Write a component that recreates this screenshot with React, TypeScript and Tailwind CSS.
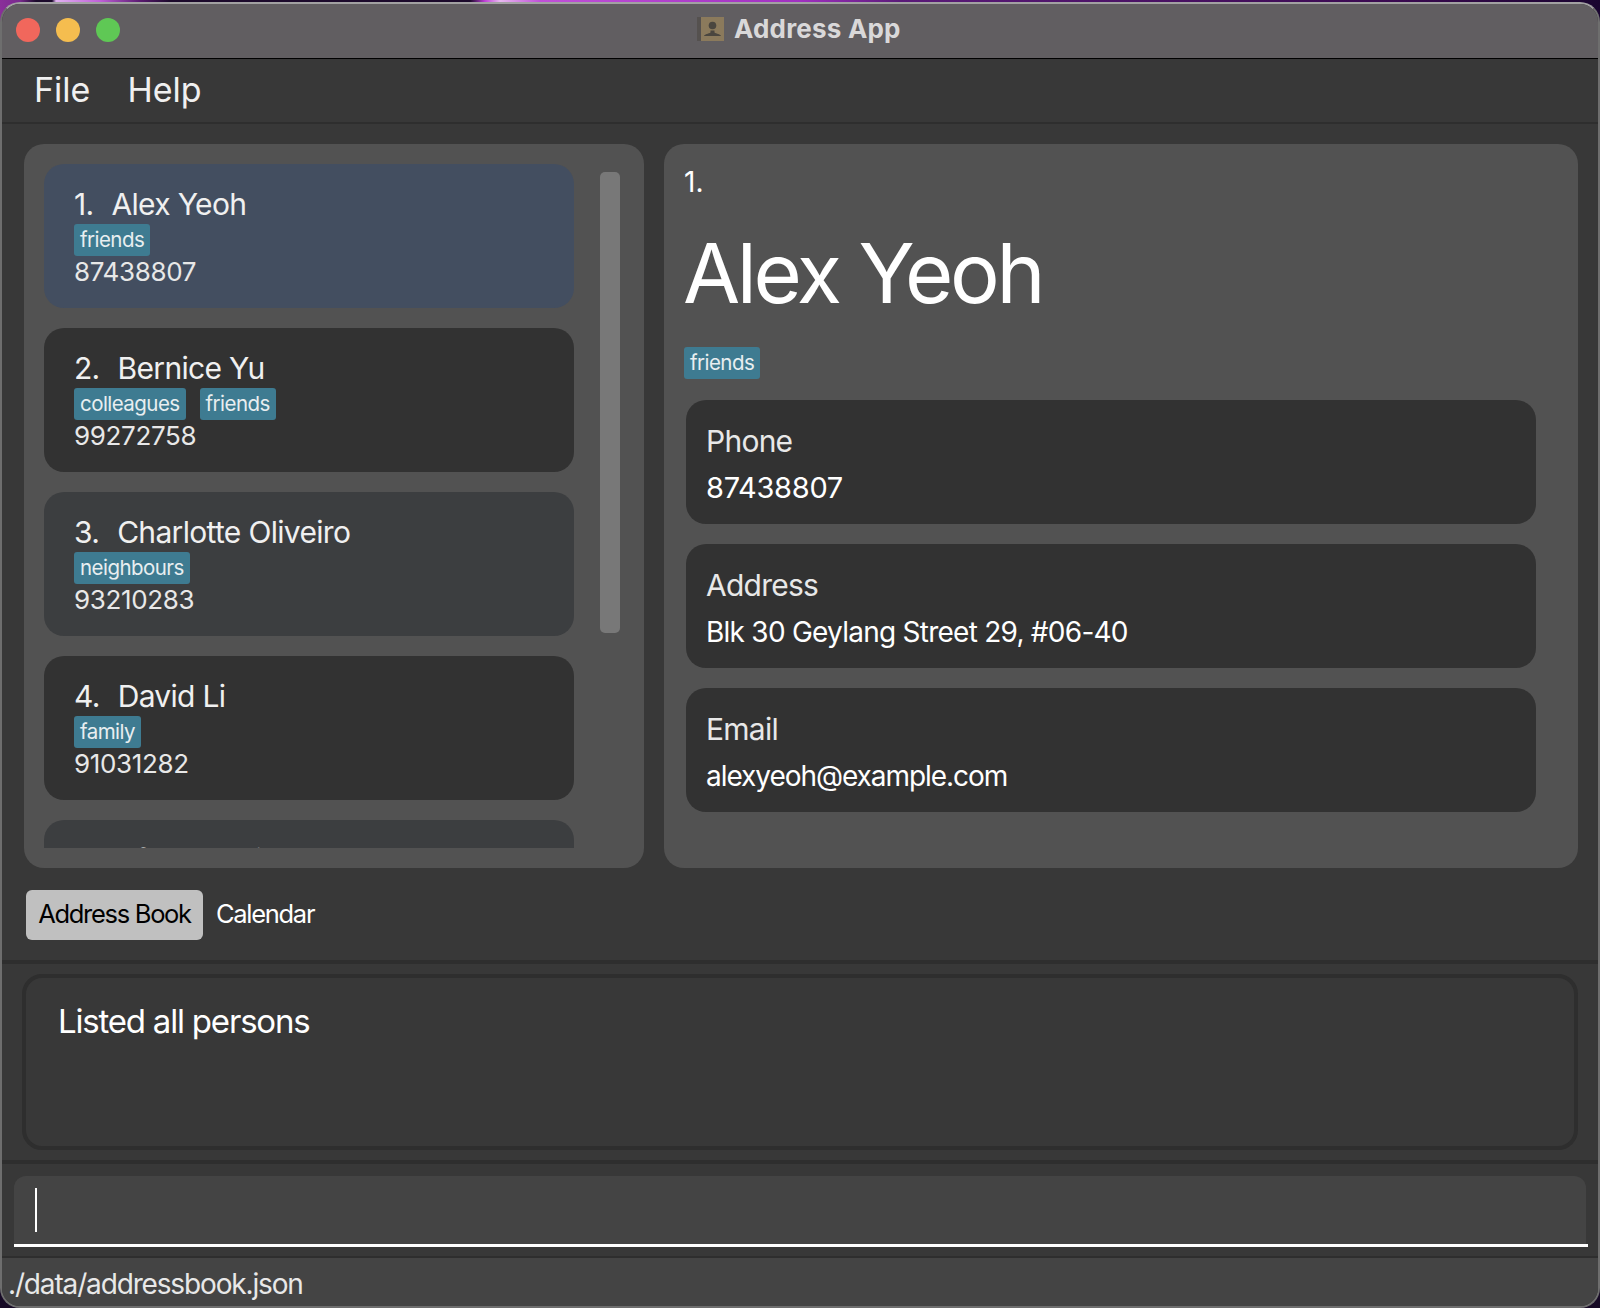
const font = "font-['Inter','Liberation_Sans',sans-serif]";

function Tag({ children }: { children: string }) {
  return (
    <span className="flex h-[32px] items-center rounded-[3px] bg-[#3e7b91] px-[6px] text-[20.5px] tracking-[-0.55px] text-[#e8eef0]">
      {children}
    </span>
  );
}

const people = [
  { n: "1.", name: "Alex Yeoh", tags: ["friends"], phone: "87438807", bg: "bg-[#434e60]" },
  { n: "2.", name: "Bernice Yu", tags: ["colleagues", "friends"], phone: "99272758", bg: "bg-[#323232]" },
  { n: "3.", name: "Charlotte Oliveiro", tags: ["neighbours"], phone: "93210283", bg: "bg-[#3c3e40]" },
  { n: "4.", name: "David Li", tags: ["family"], phone: "91031282", bg: "bg-[#323232]" },
  { n: "5.", name: "Irfan Ibrahim", tags: ["classmates"], phone: "92492021", bg: "bg-[#3c3e40]" },
];

function PersonCard({ p }: { p: (typeof people)[number] }) {
  return (
    <div className={`h-[144px] w-[530px] shrink-0 rounded-[20px] pl-[30px] pt-[21px] ${p.bg}`}>
      <div className="flex h-[38px] items-center text-[30px] leading-[38px] tracking-[-0.68px] text-[#f0f0f0]">
        <span>{p.n}</span>
        <span className="ml-[18px]">{p.name}</span>
      </div>
      <div className="mt-[1px] flex gap-[14px]">
        {p.tags.map((t) => (
          <Tag key={t}>{t}</Tag>
        ))}
      </div>
      <div className="text-[26px] leading-[32px] tracking-[-0.35px] text-[#e8e8e8]">{p.phone}</div>
    </div>
  );
}

function Field({ label, value, track }: { label: string; value: string; track: string }) {
  return (
    <div className="h-[124px] w-[850px] rounded-[20px] bg-[#323232] pl-[20px] pt-[21px]">
      <div className="text-[30px] leading-[40px] tracking-[-0.75px] text-[#e8e8e8]">{label}</div>
      <div className={`mt-[9px] leading-[36px] text-white ${track}`}>{value}</div>
    </div>
  );
}

function Divider({ h }: { h: string }) {
  return <div className={`w-full shrink-0 bg-[#2e2e2e] ${h}`} />;
}

export default function App() {
  return (
    <div
      className={`${font} h-[1308px] w-[1600px] overflow-hidden bg-[#170a26] bg-[linear-gradient(90deg,#8a2f9a_0,#7a2a8f_20px,#1c0a2c_36px,#1c0a2c_52px,#e0b0f0_56px,#c060d8_100px,#5a1a70_140px,#1c0a2c_170px,#1c0a2c_470px,#c040d8_485px,#e8b8f0_500px,#c050d8_540px,#a030c0_800px,#5a1a78_900px,#3a0a50_1400px,#1a0530_1600px)] bg-[length:100%_24px] bg-no-repeat pt-[2px]`}
    >
      <div className="flex h-[1306px] flex-col overflow-hidden rounded-[20px] border-2 border-[#6e6e6e] border-t-[#a2a1a2] bg-[#383838]">
        <div className="relative flex h-[54px] shrink-0 items-center bg-[#615e61] pb-[2px] pl-[14px]">
          <div className="flex gap-[16px]">
            <span className="h-[24px] w-[24px] rounded-full bg-[#f1675c]" />
            <span className="h-[24px] w-[24px] rounded-full bg-[#f5bd4f]" />
            <span className="h-[24px] w-[24px] rounded-full bg-[#5fc855]" />
          </div>
          <div className="absolute left-[695px] top-[5px] flex items-center gap-[9px]">
            <svg width="28" height="26" viewBox="0 0 28 26">
              <rect x="0" y="1" width="27" height="24" fill="#55514f" />
              <rect x="4" y="1" width="23" height="24" fill="#8b7a5c" />
              <circle cx="15.500" cy="9.500" r="3.800" fill="#4a463f" />
              <path d="M7 20c0-1.500 5-2.500 6.500-3.500v-2h4v2c1.500 1 6.500 2 6.500 3.500z" fill="#4a463f" />
            </svg>
            <span className="text-[26px] font-bold tracking-[0.2px] text-[#d9d8d9]">Address App</span>
          </div>
        </div>
        <div className="h-[1px] shrink-0 bg-black" />
        <div className="flex h-[63px] shrink-0 items-center gap-[37px] pb-[2px] pl-[32px] text-[34px] tracking-[0px] text-[#f0f0f0]">
          <span>File</span>
          <span>Help</span>
        </div>
        <Divider h="h-[2px]" />
        <div className="flex gap-[20px] pl-[22px] pt-[20px]">
          <div className="flex h-[724px] w-[620px] rounded-[20px] bg-[#525252] pl-[20px] pt-[20px]">
            <div className="flex h-[684px] w-[530px] flex-col gap-[20px] overflow-hidden">
              {people.map((p) => (
                <PersonCard key={p.n} p={p} />
              ))}
            </div>
            <div className="ml-[26px] mt-[8px] h-[461px] w-[20px] rounded-[5px] bg-[#787878]" />
          </div>
          <div className="h-[724px] w-[914px] rounded-[20px] bg-[#525252] pl-[20px] pt-[21px]">
            <div className="text-[28px] leading-[34px] text-white">1.</div>
            <div className="-ml-[1px] mt-[26px] text-[83px] leading-[96px] tracking-[-3.4px] text-white">Alex Yeoh</div>
            <div className="mt-[26px] flex">
              <Tag>friends</Tag>
            </div>
            <div className="ml-[2px] mt-[21px] flex flex-col gap-[20px]">
              <Field label="Phone" value="87438807" track="text-[29px] tracking-[-0.3px]" />
              <Field label="Address" value="Blk 30 Geylang Street 29, #06-40" track="text-[28px] tracking-[-0.75px]" />
              <Field label="Email" value="alexyeoh@example.com" track="text-[28px] tracking-[-1.05px]" />
            </div>
          </div>
        </div>
        <div className="flex h-[92px] shrink-0 items-center gap-[13px] pl-[24px] pt-[2px] text-[25.5px] tracking-[-1.3px]">
          <span className="flex h-[50px] w-[177px] items-center justify-center rounded-[6px] bg-[#c0c0c0] pb-[2px] text-black">Address Book</span>
          <span className="pb-[2px] text-white">Calendar</span>
        </div>
        <Divider h="h-[4px]" />
        <div className="mx-[20px] mt-[10px] h-[176px] shrink-0 rounded-[20px] border-[4px] border-[#2e2e2e] pl-[32px] pt-[21px] text-[33px] leading-[44px] tracking-[-1.2px] text-white">
          Listed all persons
        </div>
        <div className="mt-[10px]">
          <Divider h="h-[4px]" />
        </div>
        <div className="ml-[12px] mr-[10px] mt-[12px] h-[71px] shrink-0 border-b-[3px] border-white">
          <div className="mr-[2px] flex h-full items-start rounded-t-[12px] bg-[#444444] pl-[21px] pt-[12px]">
            <div className="h-[44px] w-[2px] bg-white" />
          </div>
        </div>
        <div className="mt-[9px]">
          <Divider h="h-[2px]" />
        </div>
        <div className="flex-1 bg-[#444444] pl-[6px] pt-[7px] text-[28px] leading-[38px] tracking-[-1.15px] text-[#e8e8e8]">
          ./data/addressbook.json
        </div>
      </div>
    </div>
  );
}
